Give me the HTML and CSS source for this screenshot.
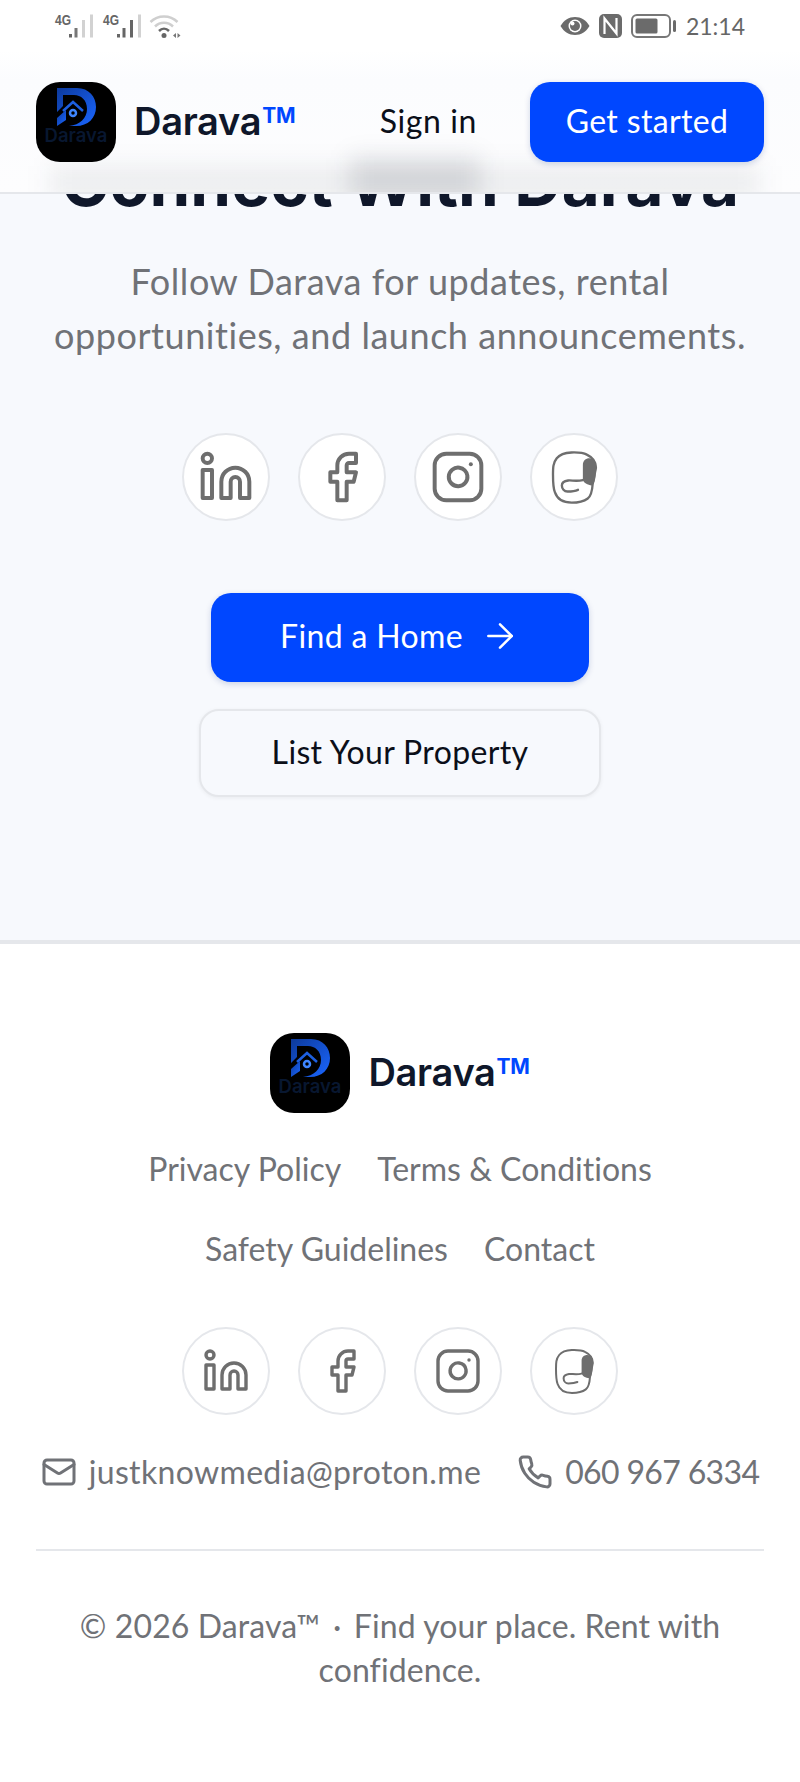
FILE: index.html
```html
<!DOCTYPE html>
<html lang="en">
<head>
  <meta charset="UTF-8">
  <title>Darava</title>
  <link rel="stylesheet" href="styles.css">
</head>
<body>

  <svg class="sprite" width="0" height="0">
    <defs>
      <linearGradient id="logoBlue" x1="0" y1="0" x2="1" y2="1">
        <stop offset="0" stop-color="#0d3a9c"/>
        <stop offset="1" stop-color="#1a66ff"/>
      </linearGradient>
    </defs>
    <symbol id="linkedin" viewBox="0 0 24 24">
      <path d="M16 8a6 6 0 0 1 6 6v7h-4v-7a2 2 0 0 0-2-2 2 2 0 0 0-2 2v7h-4v-7a6 6 0 0 1 6-6z"/>
      <rect x="2" y="9" width="4" height="12"/>
      <circle cx="4" cy="4" r="2"/>
    </symbol>
    <symbol id="facebook" viewBox="0 0 24 24">
      <path d="M18 2h-3a5 5 0 0 0-5 5v3H7v4h3v8h4v-8h3l1-4h-4V7a1 1 0 0 1 1-1h3z"/>
    </symbol>
    <symbol id="instagram" viewBox="0 0 24 24">
      <rect x="2" y="2" width="20" height="20" rx="5"/>
      <path d="M16 11.370A4 4 0 1 1 12.630 8 4 4 0 0 1 16 11.370z"/>
      <path d="M17.500 6.500h.01"/>
    </symbol>
    <symbol id="tiktok" viewBox="0 0 24 24">
      <path stroke-width="1" d="M10.900 1.500C14 1.400 16 1.600 17.500 2.400C20 3.600 21.400 5.500 21.400 8L20 15C19.800 18 19.500 20 17.900 21.200C16 22.600 13.500 23 11 23C7.500 23 4.800 21.500 3.800 18.500C3 16.500 3 14 3 11C3 8 3 6 4.600 4C6 2.200 8 1.600 10.900 1.500Z"/>
      <path class="icon-fill" d="M15.800 7C15.800 5 17 4 18.600 4C20.400 4 21.600 5.400 21.600 7.600L21.300 11C21.200 13 20.600 15.400 19.600 15.600C18 15.600 15.900 14.500 15.800 13Z"/>
      <path stroke-width="1" d="M15.800 13.300C13 14 11 13.300 9.500 13.500C7.600 13.800 6.800 14.600 6.800 15.600C6.800 17 7.800 18.200 9.200 18.200C11 18.200 12.600 18 13.700 17.500"/>
    </symbol>
    <symbol id="mail" viewBox="0 0 24 24">
      <rect x="2" y="4" width="20" height="16" rx="2"/>
      <path d="m22 7-8.970 5.700a1.940 1.940 0 0 1-2.060 0L2 7"/>
    </symbol>
    <symbol id="phone" viewBox="0 0 24 24">
      <path d="M22 16.920v3a2 2 0 0 1-2.180 2 19.790 19.790 0 0 1-8.630-3.070 19.500 19.500 0 0 1-6-6 19.790 19.790 0 0 1-3.070-8.670A2 2 0 0 1 4.110 2h3a2 2 0 0 1 2 1.720 12.840 12.840 0 0 0 .7 2.810 2 2 0 0 1-.45 2.110L8.090 9.910a16 16 0 0 0 6 6l1.270-1.270a2 2 0 0 1 2.110-.45 12.840 12.840 0 0 0 2.810.7A2 2 0 0 1 22 16.920z"/>
    </symbol>
    <symbol id="arrow" viewBox="0 0 24 24">
      <path d="M5 12h14"/>
      <path d="m12 5 7 7-7 7"/>
    </symbol>
  </svg>

  <header class="topbar">
    <div class="status">
      <div class="status-left">
        <span class="net">4G</span>
        <svg class="bars" width="26" height="24" viewBox="0 0 26 24">
          <rect x="1" y="20" width="3" height="3.500" fill="#666"/>
          <rect x="6.500" y="14" width="3" height="9.500" fill="#777"/>
          <rect x="14" y="6" width="3" height="17.500" fill="#d2d2d2"/>
          <rect x="22" y="0.500" width="3" height="23" fill="#d2d2d2"/>
        </svg>
        <span class="net net-second">4G</span>
        <svg class="bars" width="26" height="24" viewBox="0 0 26 24">
          <rect x="1" y="20" width="3" height="3.500" fill="#666"/>
          <rect x="6.500" y="14" width="3" height="9.500" fill="#666"/>
          <rect x="14" y="6" width="3" height="17.500" fill="#666"/>
          <rect x="22" y="0.500" width="3" height="23" fill="#d2d2d2"/>
        </svg>
        <svg class="wifi" width="32" height="26" viewBox="0 0 32 26">
          <path d="M1.500 9C9 1.500 21 1.500 28.500 9" fill="none" stroke="#cfcfcf" stroke-width="2.500"/>
          <path d="M6 13.500C11 8.500 19 8.500 24 13.500" fill="none" stroke="#cfcfcf" stroke-width="2.500"/>
          <path d="M10 18C13 15 17 15 20 18" fill="none" stroke="#666" stroke-width="2.500"/>
          <circle cx="15" cy="22.500" r="2.500" fill="#666"/>
          <path d="M24 22.500L27 20V25ZM28.500 20L31.500 22.500L28.500 25Z" fill="#777"/>
        </svg>
      </div>
      <div class="status-right">
        <svg width="30" height="20" viewBox="0 0 30 20">
          <path d="M0.500 10C4 4 9 1 15 1C21 1 26 4 29.500 10C26 16 21 19 15 19C9 19 4 16 0.500 10Z" fill="#6b6b6b"/>
          <circle cx="15" cy="10" r="6.500" fill="#fff"/>
          <circle cx="15" cy="10" r="5" fill="#6b6b6b"/>
          <circle cx="12.500" cy="7.500" r="2" fill="#fff"/>
        </svg>
        <svg width="23" height="24" viewBox="0 0 23 24">
          <rect width="23" height="24" rx="5" fill="#6b6b6b"/>
          <path d="M5.500 20V4.500L17.500 19.500V4" fill="none" stroke="#fff" stroke-width="2.200"/>
        </svg>
        <svg width="45" height="24" viewBox="0 0 45 24">
          <rect x="1" y="1" width="38" height="22" rx="5" fill="none" stroke="#777" stroke-width="2"/>
          <rect x="4.500" y="4.500" width="22" height="15" rx="1.500" fill="#6b6b6b"/>
          <rect x="42" y="6" width="3" height="12" rx="1.500" fill="#6b6b6b"/>
        </svg>
        <span class="clock">21:14</span>
      </div>
    </div>
    <nav class="nav">
      <a class="brand">
        <svg class="brand-logo" viewBox="0 0 80 80">
          <rect width="80" height="80" rx="24" fill="#000"/>
          <path d="M21 6H41C53 6 60 15 60 25C60 36 52 44 40 44H33C44 43 51 36 51 27C51 18 45 13 38 13H27V24L21 30Z" fill="url(#logoBlue)"/>
          <path d="M21 36L30 28V38L21 44Z" fill="url(#logoBlue)"/>
          <path d="M27 29L37 20L47 29" fill="none" stroke="#1d5fe0" stroke-width="2.500"/>
          <circle cx="37" cy="31" r="3" fill="none" stroke="#3f86ff" stroke-width="2.500"/>
          <text x="40" y="60" text-anchor="middle" class="logo-word">Darava</text>
        </svg>
        <span class="brand-name">Darava<span class="tm">TM</span></span>
      </a>
      <div class="nav-actions">
        <a class="signin">Sign in</a>
        <a class="btn btn-primary btn-nav">Get started</a>
      </div>
    </nav>
  </header>

  <main class="connect">
    <h1>Connect With Darava</h1>
    <p class="lead">Follow Darava for updates, rental opportunities, and launch announcements.</p>

    <div class="socials socials-hero">
      <a class="social"><svg class="icon"><use href="#linkedin"/></svg></a>
      <a class="social"><svg class="icon"><use href="#facebook"/></svg></a>
      <a class="social"><svg class="icon"><use href="#instagram"/></svg></a>
      <a class="social"><svg class="icon"><use href="#tiktok"/></svg></a>
    </div>

    <div class="cta">
      <a class="btn btn-primary btn-find">Find a Home <svg class="icon"><use href="#arrow"/></svg></a>
      <a class="btn btn-outline">List Your Property</a>
    </div>
  </main>

  <footer class="footer">
    <a class="brand">
      <svg class="brand-logo" viewBox="0 0 80 80">
        <rect width="80" height="80" rx="24" fill="#000"/>
        <path d="M21 6H41C53 6 60 15 60 25C60 36 52 44 40 44H33C44 43 51 36 51 27C51 18 45 13 38 13H27V24L21 30Z" fill="url(#logoBlue)"/>
        <path d="M21 36L30 28V38L21 44Z" fill="url(#logoBlue)"/>
        <path d="M27 29L37 20L47 29" fill="none" stroke="#1d5fe0" stroke-width="2.500"/>
        <circle cx="37" cy="31" r="3" fill="none" stroke="#3f86ff" stroke-width="2.500"/>
        <text x="40" y="60" text-anchor="middle" class="logo-word">Darava</text>
      </svg>
      <span class="brand-name">Darava<span class="tm">TM</span></span>
    </a>

    <div class="links">
      <a>Privacy Policy</a>
      <a>Terms &amp; Conditions</a>
      <a>Safety Guidelines</a>
      <a>Contact</a>
    </div>

    <div class="socials">
      <a class="social"><svg class="icon"><use href="#linkedin"/></svg></a>
      <a class="social"><svg class="icon"><use href="#facebook"/></svg></a>
      <a class="social"><svg class="icon"><use href="#instagram"/></svg></a>
      <a class="social"><svg class="icon"><use href="#tiktok"/></svg></a>
    </div>

    <div class="contact">
      <a class="contact-item"><svg class="icon"><use href="#mail"/></svg>justknowmedia@proton.me</a>
      <a class="contact-item contact-phone"><svg class="icon"><use href="#phone"/></svg>060 967 6334</a>
    </div>

    <p class="copyright">© 2026 Darava™ &thinsp;·&thinsp; Find your place. Rent with confidence.</p>
  </footer>

</body>
</html>
```

FILE: styles.css
```css
* {
  box-sizing: border-box;
}

html, body {
  margin: 0;
  padding: 0;
}

body {
  font-family: "Lato", "Noto Sans", sans-serif;
  font-variant-ligatures: none;
  color: #707277;
  background: #fff;
  overflow-x: hidden;
}

.sprite {
  position: absolute;
}

.logo-word {
  font-family: "Inter", sans-serif;
  font-size: 18.500px;
  font-weight: 600;
  fill: #081730;
}

/* header sits over the scrolled page */
.topbar {
  position: absolute;
  top: 0;
  left: 0;
  right: 0;
  height: 194px;
  background: linear-gradient(#fff 50px, #fbfcfe 80px, #fdfdfe);
  border-bottom: 2px solid #e5e7eb;
  overflow: hidden;
}

/* haze of the heading scrolled under the header */
.topbar::before,
.topbar::after {
  content: "";
  position: absolute;
  bottom: -8px;
  filter: blur(12px);
}

.topbar::before {
  left: 50px;
  right: 40px;
  height: 34px;
  background: rgba(15, 23, 42, 0.07);
}

.topbar::after {
  left: 350px;
  width: 130px;
  height: 42px;
  background: rgba(15, 23, 42, 0.12);
}

.status {
  height: 50px;
  padding: 0 55px;
  display: flex;
  justify-content: space-between;
  align-items: center;
}

.status-left,
.status-right {
  display: flex;
  align-items: center;
}

.status-left {
  padding-top: 2px;
}

.status-right {
  gap: 9px;
  padding-top: 2px;
}

.net {
  font-family: "Liberation Sans", sans-serif;
  font-size: 15px;
  font-weight: 700;
  color: #666;
  margin-right: -5px;
  margin-left: -2px;
  transform: translateY(-7px) scaleX(0.8);
}

.net-second {
  margin-left: 7px;
}

.wifi {
  margin-left: 7px;
}

.clock {
  font-size: 23px;
  color: #666;
  margin-left: 1px;
}

.nav {
  padding: 32px 36px 0;
  display: flex;
  justify-content: space-between;
  align-items: center;
  position: relative;
  z-index: 1;
}

.nav-actions {
  display: flex;
  align-items: center;
  gap: 53px;
}

.brand {
  display: flex;
  align-items: center;
  gap: 18px;
}

.brand-logo {
  width: 80px;
  height: 80px;
}

.brand-name {
  font-family: "Inter", sans-serif;
  font-size: 38px;
  font-weight: 600;
  letter-spacing: -0.3px;
  color: #0f172a;
  padding-bottom: 2px;
}

.tm {
  color: #0047ff;
  font-size: 21px;
  font-weight: 700;
  line-height: 0;
  margin-left: 1px;
  vertical-align: 12px;
}

.signin {
  font-size: 32px;
  letter-spacing: 0.6px;
  color: #0b0f19;
  padding-bottom: 4px;
}

.btn {
  display: flex;
  align-items: center;
  justify-content: center;
  font-size: 32px;
  letter-spacing: 0.35px;
  border-radius: 20px;
  padding-bottom: 4px;
}

.btn-primary {
  background: #0047ff;
  color: #fff;
  box-shadow: 0 2px 6px rgba(0, 40, 120, 0.18);
}

.btn-nav {
  width: 234px;
  height: 80px;
}

.btn-find {
  width: 378px;
  height: 89px;
  gap: 17px;
}

.btn-outline {
  width: 402px;
  height: 88px;
  color: #0b0f19;
  background: #f7f9fd;
  border: 2px solid #e5e7eb;
  box-shadow: 0 1px 4px rgba(0, 0, 0, 0.06);
}

.connect {
  background: #f7f9fd;
  border-bottom: 4px solid #e5e7eb;
  height: 944px;
  padding-top: 147px;
  display: flex;
  flex-direction: column;
  align-items: center;
  text-align: center;
}

h1 {
  margin: 0;
  font-family: "Inter", sans-serif;
  font-size: 65.500px;
  line-height: 72px;
  font-weight: 700;
  color: #0f172a;
  white-space: nowrap;
}

.lead {
  margin: 35px 0 0;
  padding: 0 36px;
  font-size: 36px;
  line-height: 54px;
  letter-spacing: 0.55px;
}

.socials {
  display: flex;
  justify-content: center;
  gap: 28px;
}

.socials-hero {
  margin-top: 71px;
}

.social {
  width: 88px;
  height: 88px;
  border-radius: 50%;
  border: 2px solid #e5e7eb;
  background: #fff;
  color: #6e6e6e;
  display: flex;
  align-items: center;
  justify-content: center;
}

.icon {
  width: 48px;
  height: 48px;
  fill: none;
  stroke: currentColor;
  stroke-width: 1.700;
  stroke-linecap: round;
  stroke-linejoin: round;
}

.icon-fill {
  fill: currentColor;
  stroke: none;
}

.socials-hero .icon {
  width: 56px;
  height: 56px;
}

.btn .icon {
  width: 40px;
  height: 40px;
  stroke-width: 1.500;
}

.cta {
  margin-top: 72px;
  display: flex;
  flex-direction: column;
  align-items: center;
  gap: 27px;
}

.footer {
  padding: 89px 36px 0;
  display: flex;
  flex-direction: column;
  align-items: center;
  text-align: center;
  height: 838px;
}

.links {
  margin-top: 16px;
  display: flex;
  flex-wrap: wrap;
  justify-content: center;
  gap: 0 36px;
  font-size: 32px;
  line-height: 80px;
}

.footer .socials {
  margin-top: 38px;
}

.contact {
  margin-top: 35px;
  display: flex;
  justify-content: center;
  gap: 36px;
  font-size: 32px;
  line-height: 44px;
  letter-spacing: 0.35px;
  white-space: nowrap;
  width: 100%;
  padding-bottom: 55px;
  border-bottom: 2px solid #e5e7eb;
}

.contact-item {
  display: flex;
  align-items: center;
  gap: 12px;
}

.contact-phone {
  letter-spacing: -0.65px;
}

.contact .icon {
  width: 36px;
  height: 36px;
  stroke-width: 2;
}

.copyright {
  margin: 53px 0 0;
  font-size: 32px;
  line-height: 44px;
  letter-spacing: 0.1px;
}
```
